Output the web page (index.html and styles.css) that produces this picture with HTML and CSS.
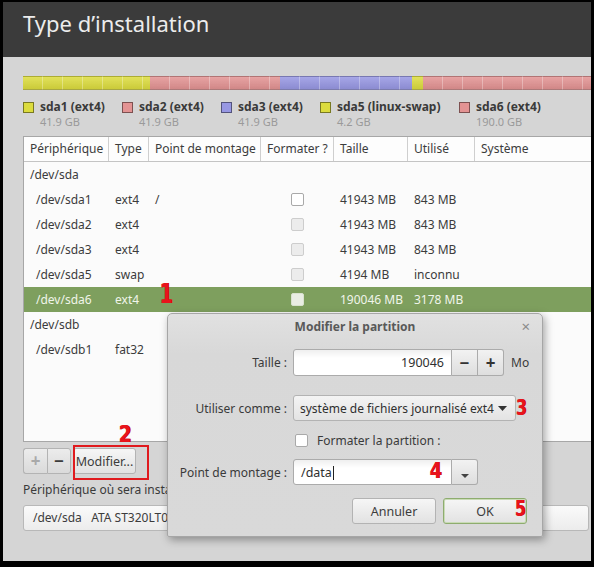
FILE: index.html
```html
<!DOCTYPE html>
<html>
<head>
<meta charset="utf-8">
<link rel="stylesheet" href="styles.css">
</head>
<body>

<div class="window">
  <div class="window-header">
    <h1 class="window-title">Type d’installation</h1>
  </div>

  <div class="window-body">
    <div class="disk-bar">
      <div class="disk-seg seg-yellow" style="width:127px"></div>
      <div class="disk-seg seg-red" style="width:130px"></div>
      <div class="disk-seg seg-blue" style="width:132px"></div>
      <div class="disk-seg seg-yellow" style="width:11px"></div>
      <div class="disk-seg seg-red" style="width:200px"></div>
    </div>

    <div class="legend">
      <div class="legend-item">
        <span class="legend-swatch seg-yellow"></span>
        <div>
          <div class="legend-name">sda1 (ext4)</div>
          <div class="legend-size">41.9 GB</div>
        </div>
      </div>
      <div class="legend-item">
        <span class="legend-swatch seg-red"></span>
        <div>
          <div class="legend-name">sda2 (ext4)</div>
          <div class="legend-size">41.9 GB</div>
        </div>
      </div>
      <div class="legend-item">
        <span class="legend-swatch seg-blue"></span>
        <div>
          <div class="legend-name">sda3 (ext4)</div>
          <div class="legend-size">41.9 GB</div>
        </div>
      </div>
      <div class="legend-item legend-wide">
        <span class="legend-swatch seg-yellow"></span>
        <div>
          <div class="legend-name">sda5 (linux-swap)</div>
          <div class="legend-size">4.2 GB</div>
        </div>
      </div>
      <div class="legend-item">
        <span class="legend-swatch seg-red"></span>
        <div>
          <div class="legend-name">sda6 (ext4)</div>
          <div class="legend-size">190.0 GB</div>
        </div>
      </div>
    </div>

    <div class="part-table">
      <div class="part-row part-head">
        <div class="cell">Périphérique</div>
        <div class="cell">Type</div>
        <div class="cell">Point de montage</div>
        <div class="cell">Formater ?</div>
        <div class="cell">Taille</div>
        <div class="cell">Utilisé</div>
        <div class="cell">Système</div>
      </div>

      <div class="part-row">
        <div class="cell">/dev/sda</div>
      </div>
      <div class="part-row">
        <div class="cell cell-child">/dev/sda1</div>
        <div class="cell">ext4</div>
        <div class="cell">/</div>
        <div class="cell cell-check"><span class="check"></span></div>
        <div class="cell">41943 MB</div>
        <div class="cell">843 MB</div>
        <div class="cell"></div>
      </div>
      <div class="part-row">
        <div class="cell cell-child">/dev/sda2</div>
        <div class="cell">ext4</div>
        <div class="cell"></div>
        <div class="cell cell-check"><span class="check check-off"></span></div>
        <div class="cell">41943 MB</div>
        <div class="cell">843 MB</div>
        <div class="cell"></div>
      </div>
      <div class="part-row">
        <div class="cell cell-child">/dev/sda3</div>
        <div class="cell">ext4</div>
        <div class="cell"></div>
        <div class="cell cell-check"><span class="check check-off"></span></div>
        <div class="cell">41943 MB</div>
        <div class="cell">843 MB</div>
        <div class="cell"></div>
      </div>
      <div class="part-row">
        <div class="cell cell-child">/dev/sda5</div>
        <div class="cell">swap</div>
        <div class="cell"></div>
        <div class="cell cell-check"><span class="check check-off"></span></div>
        <div class="cell">4194 MB</div>
        <div class="cell">inconnu</div>
        <div class="cell"></div>
      </div>
      <div class="part-row selected">
        <div class="cell cell-child">/dev/sda6</div>
        <div class="cell">ext4</div>
        <div class="cell"></div>
        <div class="cell cell-check"><span class="check check-off"></span></div>
        <div class="cell">190046 MB</div>
        <div class="cell">3178 MB</div>
        <div class="cell"></div>
      </div>
      <div class="part-row">
        <div class="cell">/dev/sdb</div>
      </div>
      <div class="part-row">
        <div class="cell cell-child">/dev/sdb1</div>
        <div class="cell">fat32</div>
      </div>
      <div class="part-filler"></div>
    </div>

    <div class="toolbar">
      <div class="btn-group">
        <button class="btn btn-icon btn-disabled">+</button>
        <button class="btn btn-icon">−</button>
      </div>
      <button class="btn btn-edit">Modifier...</button>
    </div>

    <div class="device-label">Périphérique où sera installé le programme de démarrage :</div>
    <div class="device-combo">/dev/sda&nbsp;&nbsp;&nbsp;ATA ST320LT012-9WS14C (320.1 GB)</div>
  </div>

  <!-- boite de dialogue par-dessus la fenêtre -->
  <div class="dialog">
    <div class="dialog-title">
      Modifier la partition
      <span class="dialog-close">×</span>
    </div>

    <div class="dlg-row row-size">
      <label class="dlg-label">Taille :</label>
      <div class="field-group">
        <div class="field field-num">190046</div>
        <button class="spin">−</button>
        <button class="spin spin-last">+</button>
      </div>
      <span class="unit">Mo</span>
    </div>

    <div class="dlg-row row-use">
      <label class="dlg-label">Utiliser comme :</label>
      <div class="combo">
        <span>système de fichiers journalisé ext4</span>
        <svg width="9" height="5" viewBox="0 0 9 5"><path d="M0 0h9L4.5 5z" fill="#333"/></svg>
      </div>
    </div>

    <div class="dlg-row row-format">
      <span class="dlg-label"></span>
      <span class="check dlg-check"></span>
      <span class="check-text">Formater la partition :</span>
    </div>

    <div class="dlg-row row-mount">
      <label class="dlg-label">Point de montage :</label>
      <div class="field-group">
        <div class="field field-text">/data<span class="caret"></span></div>
        <button class="spin spin-last">
          <svg width="8" height="4" viewBox="0 0 8 4"><path d="M0 0h8L4 4z" fill="#444"/></svg>
        </button>
      </div>
    </div>

    <div class="dlg-buttons">
      <button class="btn dlg-btn">Annuler</button>
      <button class="btn dlg-btn btn-default">OK</button>
    </div>
  </div>

  <!-- annotations -->
  <div class="mark mark-1">1</div>
  <div class="mark mark-2">2</div>
  <div class="mark-box"></div>
  <div class="mark mark-3">3</div>
  <div class="mark mark-4">4</div>
  <div class="mark mark-5">5</div>
</div>

</body>
</html>
```

FILE: styles.css
```css
body {
  margin: 0;
  background-color: #000;
  font-family: "Noto Sans", "Open Sans", sans-serif;
  font-size: 12px;
  color: #3c3c3c;
}

.window {
  position: relative;
  margin: 2px 3px 0;
  width: 588px;
  height: 559px;
  background-color: #d5d5d5;
  overflow: hidden;
}

.window-header {
  height: 55px;
  background-color: #3b3b3b;
}

.window-title {
  margin: 0;
  padding: 6px 0 0 20px;
  font-size: 22px;
  font-weight: normal;
  line-height: 30px;
  color: #ececec;
}

.window-body {
  padding: 19px 0 0 20px;
}

/* barre des partitions */
.disk-bar {
  display: flex;
  width: 640px;
  height: 14px;
}

.disk-seg {
  flex: 0 0 auto;
  box-sizing: border-box;
  border-top: 1px solid rgba(0, 0, 0, 0.15);
  border-bottom: 1px solid rgba(0, 0, 0, 0.25);
  background-image:
    repeating-linear-gradient(90deg, transparent 0 19px, rgba(255, 255, 255, 0.3) 19px 20px),
    linear-gradient(to bottom, rgba(255, 255, 255, 0.15), rgba(0, 0, 0, 0.08));
}

.seg-yellow { background-color: #dcdc3e; }
.seg-red { background-color: #e39393; }
.seg-blue { background-color: #9797e3; }

.legend {
  display: flex;
  margin-top: 10px;
}

.legend-item {
  display: flex;
  width: 99px;
  gap: 6px;
}

.legend-wide {
  width: 139px;
}

.legend-swatch {
  flex: 0 0 auto;
  width: 9px;
  height: 9px;
  margin-top: 2px;
  border: 1px solid rgba(0, 0, 0, 0.45);
}

.legend-name {
  font-weight: bold;
  font-size: 12px;
  line-height: 14px;
  color: #3a3a3a;
}

.legend-size {
  font-size: 11px;
  line-height: 15px;
  color: #9a9a9a;
}

/* tableau */
.part-table {
  margin-top: 7px;
  width: 640px;
  border: 1px solid #a7a7a7;
  background-color: #fbfbfb;
}

.part-row {
  display: grid;
  grid-template-columns: 85px 40px 112px 73px 74px 67px 188px;
  height: 25px;
  line-height: 25px;
  white-space: nowrap;
}

.part-head {
  height: 24px;
  line-height: 23px;
  border-bottom: 1px solid #c4c4c4;
  background-color: #fdfdfd;
}

.part-head .cell {
  border-right: 1px solid #cfcfcf;
}

.cell {
  padding-left: 6px;
  overflow: hidden;
}

.cell-child {
  padding-left: 12px;
}

.cell-check {
  display: flex;
  align-items: center;
  justify-content: center;
  padding-left: 0;
}

.check {
  display: inline-block;
  box-sizing: border-box;
  width: 13px;
  height: 13px;
  border: 1px solid #a9a9a9;
  border-radius: 2px;
  background-color: #fff;
}

.check-off {
  border-color: #cdcdcd;
  background-color: #ececec;
}

.selected {
  background-color: #7e9f5e;
  color: #f0f5ea;
}

.selected .check-off {
  border-color: #d9e2cf;
  background-color: #e9ede4;
}

.part-filler {
  height: 79px;
}

/* boutons */
.btn {
  box-sizing: border-box;
  font-family: inherit;
  font-size: 12px;
  color: #3c3c3c;
  border: 1px solid #b3b3b3;
  border-radius: 3px;
  background: linear-gradient(to bottom, #f6f6f6, #e2e2e2);
  padding: 0;
}

.toolbar {
  display: flex;
  gap: 2px;
  margin-top: 6px;
  height: 26px;
}

.btn-group {
  display: flex;
}

.btn-icon {
  width: 24px;
  height: 26px;
  font-size: 17px;
  font-weight: bold;
  line-height: 22px;
  background: linear-gradient(to bottom, #ececec, #dadada);
}

.btn-group .btn-icon:first-child {
  border-radius: 3px 0 0 3px;
  border-right: none;
}

.btn-group .btn-icon:last-child {
  border-radius: 0 3px 3px 0;
}

.btn-disabled {
  color: #a9a9a9;
}

.btn-edit {
  width: 63px;
  height: 26px;
  font-size: 12.5px;
}

.device-label {
  margin-top: 9px;
  line-height: 14px;
  color: #3a3a3a;
}

.device-combo {
  box-sizing: border-box;
  margin-top: 8px;
  width: 566px;
  height: 26px;
  padding-left: 9px;
  line-height: 24px;
  white-space: nowrap;
  border: 1px solid #b8b8b8;
  border-radius: 3px;
  background: linear-gradient(to bottom, #fafafa, #ececec);
}

/* dialogue */
.dialog {
  position: absolute;
  left: 164px;
  top: 311px;
  width: 376px;
  height: 224px;
  box-sizing: border-box;
  border: 1px solid #a6a6a6;
  border-radius: 5px 5px 2px 2px;
  background: linear-gradient(to bottom, #e1e1e1, #d8d8d8 40px, #d9d9d9);
  box-shadow: 2px 3px 8px rgba(0, 0, 0, 0.35);
}

.dialog-title {
  position: relative;
  height: 25px;
  line-height: 25px;
  text-align: center;
  font-weight: bold;
  color: #595959;
}

.dialog-close {
  position: absolute;
  right: 12px;
  top: 0;
  font-weight: normal;
  font-size: 15px;
  color: #8a8a8a;
}

.dlg-row {
  display: flex;
  align-items: center;
}

.dlg-label {
  flex: 0 0 auto;
  width: 119px;
  margin-right: 6px;
  text-align: right;
  color: #3a3a3a;
}

.row-size { margin-top: 10px; height: 27px; }
.row-use { margin-top: 19px; height: 26px; }
.row-format { margin-top: 6px; height: 26px; }
.row-mount { margin-top: 6px; height: 26px; }

.field-group {
  display: flex;
  height: 27px;
}

.row-mount .field-group {
  height: 26px;
}

.field {
  box-sizing: border-box;
  width: 159px;
  height: 100%;
  padding: 0 7px;
  line-height: 25px;
  font-size: 12.5px;
  border: 1px solid #ababab;
  border-radius: 3px 0 0 3px;
  background: linear-gradient(to bottom, #efefef, #fff 8px);
  color: #2f2f2f;
}

.field-num {
  text-align: right;
}

.caret {
  display: inline-block;
  width: 1px;
  height: 14px;
  margin-left: 1px;
  vertical-align: -3px;
  background-color: #222;
}

.spin {
  box-sizing: border-box;
  width: 26px;
  height: 100%;
  font-family: inherit;
  font-size: 17px;
  font-weight: bold;
  line-height: 20px;
  color: #333;
  border: 1px solid #ababab;
  border-left: none;
  background: linear-gradient(to bottom, #f2f2f2, #dedede);
  padding: 0;
}

.spin-last {
  border-radius: 0 3px 3px 0;
}

.unit {
  margin-left: 7px;
  color: #3a3a3a;
}

.combo {
  box-sizing: border-box;
  display: flex;
  align-items: center;
  justify-content: space-between;
  width: 223px;
  height: 26px;
  padding: 0 8px 0 6px;
  font-size: 12px;
  border: 1px solid #b3b3b3;
  border-radius: 3px;
  background: linear-gradient(to bottom, #f4f4f4, #e3e3e3);
  color: #2f2f2f;
  white-space: nowrap;
}

.dlg-check {
  margin-left: 2px;
}

.check-text {
  margin-left: 9px;
  color: #3a3a3a;
}

.dlg-buttons {
  display: flex;
  justify-content: flex-end;
  gap: 7px;
  margin-top: 13px;
  padding-right: 15px;
}

.dlg-btn {
  width: 84px;
  height: 26px;
  font-size: 12.5px;
}

.btn-default {
  border-color: #8eac6f;
  box-shadow: inset 0 0 0 1px #c9dbb6;
}

/* annotations rouges */
.mark {
  position: absolute;
  font-family: "DejaVu Sans", sans-serif;
  font-weight: bold;
  line-height: 1;
  color: #e8141c;
  text-shadow: 1px 0 0 #b00;
}

.mark-1 { left: 154px; top: 279px; font-size: 26px; transform: scaleX(0.75); }
.mark-2 { left: 114px; top: 421px; font-size: 23px; transform: scaleX(0.8); }
.mark-3 { left: 511px; top: 396px; font-size: 21px; transform: scaleX(0.75); }
.mark-4 { left: 425px; top: 458px; font-size: 22px; transform: scaleX(0.8); }
.mark-5 { left: 510px; top: 497px; font-size: 21px; transform: scaleX(0.75); }

.mark-box {
  position: absolute;
  left: 70px;
  top: 443px;
  width: 72px;
  height: 31px;
  border: 2px solid #e01a1e;
}
```
